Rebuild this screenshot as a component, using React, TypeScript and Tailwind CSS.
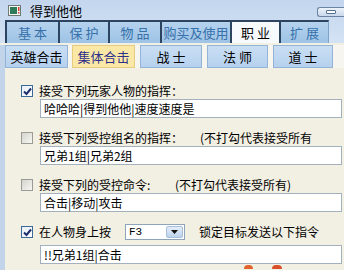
import React from 'react'

const mainTabs = [
	{ label: '基 本', w: 'w-[53px]' },
	{ label: '保 护', w: 'w-[50px]' },
	{ label: '物 品', w: 'w-[52px]' },
	{ label: '购买及使用', w: 'w-[70px]' },
	{ label: '职 业', w: 'w-[49px]', active: true },
	{ label: '扩 展', w: 'w-[50px]' },
]

const subTabs = [
	{ label: '英雄合击', w: 'w-[63px]' },
	{ label: '集体合击', w: 'w-[63px]', active: true },
	{ label: '战 士', w: 'w-[62px]' },
	{ label: '法 师', w: 'w-[61px]' },
	{ label: '道 士', w: 'w-[60px]' },
]

const CheckBox = ({ checked }: { checked?: boolean }) => (
	<div className={`w-[12px] h-[12px] shrink-0 border flex items-center justify-center ${checked ? 'border-[#3c6a98] bg-gradient-to-br from-[#e8eef5] to-white' : 'border-[#9a9a96] bg-gradient-to-br from-[#d4d3cc] to-[#f8f8f4]'}`}>
		{checked && (
			<svg width="9" height="9" viewBox="0 0 9 9">
				<path d="M1 4.5 L3.5 7 L8 1.5" fill="none" stroke="#1c2f6e" strokeWidth="2" />
			</svg>
		)}
	</div>
)

const TextBox = ({ value }: { value: string }) => (
	<div className="ml-[35px] w-[302px] h-[19px] border border-[#a3b0bd] bg-white flex items-center pl-[3px] text-[12px] text-black leading-none">
		{value}
	</div>
)

export default function App() {
	return (
		<div className="w-[344px] h-[270px] overflow-hidden bg-[#f2efe3] font-['Noto_Sans_CJK_SC',sans-serif] text-black">
			{/* Title bar + main tabs */}
			<div className="bg-gradient-to-b from-[#c3d6ee] to-[#d4e3f4]">
				<div className="h-[20px] flex items-center">
					<svg className="ml-[8px]" width="13" height="11" viewBox="0 0 13 11">
						<rect x="0.5" y="0.5" width="12" height="10" fill="#f4f6f4" stroke="#6f7a74" />
						<rect x="2" y="2" width="7" height="7" fill="#2f7a58" />
						<rect x="10" y="2" width="1.5" height="4" fill="#d23a2a" />
						<rect x="10" y="7" width="1.5" height="1.5" fill="#d23a2a" />
					</svg>
					<span className="ml-[9px] text-[13px] leading-none">得到他他</span>
					<div className="ml-auto self-start mt-[7px] w-[27px] h-[10px] rounded-l-[3px] border border-r-0 border-[#6b84a4] bg-gradient-to-b from-[#eef3fa] to-[#c9d8ec] flex items-center justify-center">
						<div className="w-[10px] h-[4px] rounded-[1px] border border-[#55708f] bg-white"></div>
					</div>
				</div>
				<div className="h-[23px] flex pl-[5px]">
					{mainTabs.map((t, i) => (
						<div
							key={t.label}
							className={`${t.w} h-full flex items-center justify-center text-[13px] leading-none border-t-2 border-l-2 border-[#2c4460] ${i === mainTabs.length - 1 ? 'border-r border-r-[#7fa3c6]' : ''} ${t.active ? 'bg-[#f7fafd] text-black' : 'bg-gradient-to-b from-[#b5d2ee] to-[#9ec3e5] text-[#3671ab]'}`}
						>
							{t.label}
						</div>
					))}
				</div>
			</div>

			{/* Body */}
			<div className="border-l-[5px] border-[#c1d4ea] h-[227px]">
				<div className="mt-[2px] h-[23px] flex gap-[4px] bg-[#f6f5ef]">
					{subTabs.map((t, i) => (
						<div
							key={t.label}
							className={`${t.w} ${i >= 2 ? 'ml-[1px]' : ''} h-full flex items-center justify-center text-[13px] leading-none border ${t.active ? 'bg-[#fce8a6] border-[#e6cc7e] text-[#2c2f8a]' : 'bg-gradient-to-b from-[#c9def3] to-[#b6d1ee] border-[#93b4d6] text-black'}`}
						>
							{t.label}
						</div>
					))}
				</div>

				<div className="pt-[15px] text-[12px] leading-none">
					{/* Row 1 */}
					<div className="h-[16px] flex items-center pl-[16px]">
						<CheckBox checked />
						<span className="ml-[6px]">接受下列玩家人物的指挥：</span>
					</div>
					<TextBox value="哈哈哈|得到他他|速度速度是" />

					{/* Row 2 */}
					<div className="mt-[12px] h-[16px] flex items-center pl-[16px]">
						<CheckBox />
						<span className="ml-[6px] w-[161px]">接受下列受控组名的指挥：</span>
						<span>(不打勾代表接受所有</span>
					</div>
					<TextBox value="兄弟1组|兄弟2组" />

					{/* Row 3 */}
					<div className="mt-[12px] h-[16px] flex items-center pl-[16px]">
						<CheckBox />
						<span className="ml-[6px] w-[136px]">接受下列的受控命令:</span>
						<span>(不打勾代表接受所有)</span>
					</div>
					<TextBox value="合击|移动|攻击" />

					{/* Row 4 */}
					<div className="mt-[12px] h-[16px] flex items-center pl-[16px]">
						<CheckBox checked />
						<span className="ml-[6px] w-[86px]">在人物身上按</span>
						<div className="w-[60px] h-[16px] border border-[#8ea4bb] bg-white flex items-center">
							<span className="pl-[3px] flex-1 font-['Liberation_Mono',monospace] text-[11px]">F3</span>
							<div className="w-[17px] h-[12px] mr-[1px] rounded-[2px] border border-[#a9bfd8] bg-gradient-to-b from-[#e4eefa] to-[#bcd2ec] flex items-center justify-center">
								<svg width="7" height="4" viewBox="0 0 7 4">
									<path d="M0 0 H7 L3.5 4 Z" fill="#111" />
								</svg>
							</div>
						</div>
						<span className="ml-[14px]">锁定目标发送以下指令</span>
					</div>
					<div className="mt-[5px]">
						<TextBox value="!!兄弟1组|合击" />
					</div>
					<div className="flex h-[4px] mt-[1px]">
						<div className="ml-[239px] w-[9px] h-full rounded-t-full bg-[#e2622e]"></div>
						<div className="ml-[19px] w-[10px] h-full rounded-t-full bg-[#d9502a]"></div>
					</div>
				</div>
			</div>
		</div>
	)
}
